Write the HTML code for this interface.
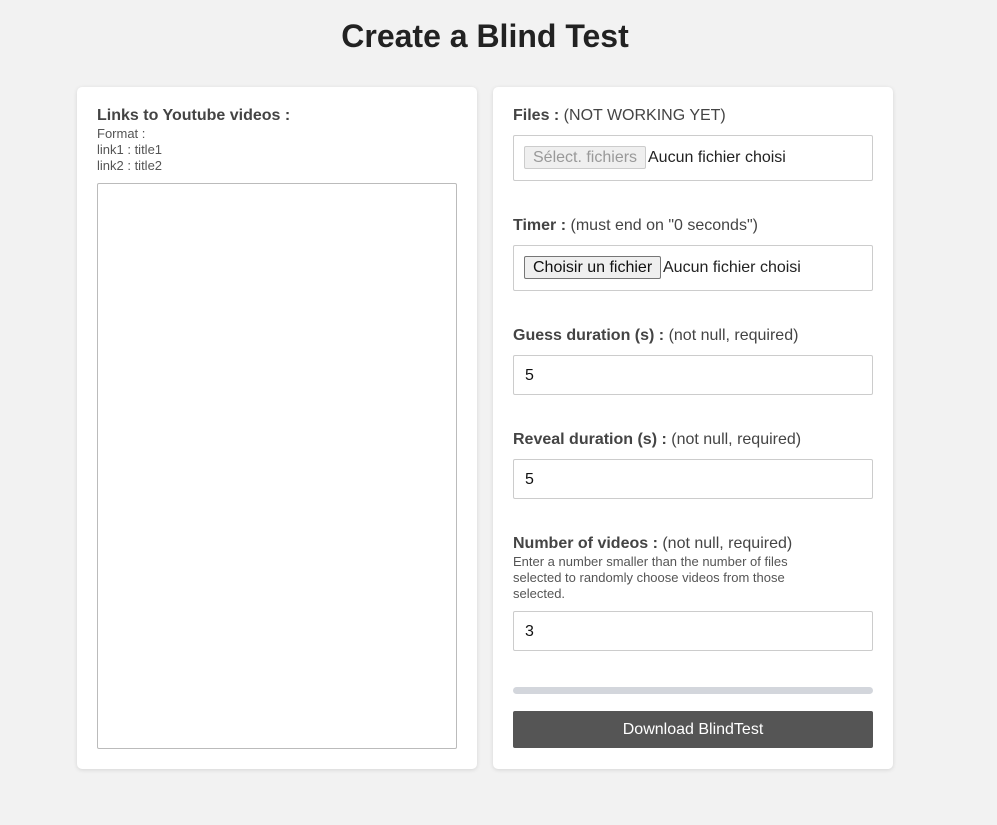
<!DOCTYPE html>
<html><head><meta charset="utf-8"><style>
body{margin:0;width:997px;height:825px;background:#f2f2f2;font-family:"Liberation Sans",Arial,sans-serif;color:#444;position:relative;overflow:hidden}
.a{position:absolute}
h1{position:absolute;left:0;width:970px;text-align:center;top:18px;margin:0;font-size:32px;font-weight:bold;color:#222}
.card{position:absolute;background:#fff;border-radius:5px;box-shadow:0 1px 4px rgba(0,0,0,.12)}
.lbl{position:absolute;font-size:16px;line-height:18px;white-space:nowrap}
.lbl b{color:#444}
.sm{position:absolute;font-size:13px;line-height:16px;color:#555}
.box{position:absolute;left:513px;width:358px;border:1px solid #ccc;border-radius:2px;background:#fff}
.num{font-size:16px;color:#111;position:absolute;left:11px}
.fb{position:absolute;top:10px;left:10px;height:23px;font-size:16px;line-height:21px;padding:0 8px;border:1px solid #767676;border-radius:2px;background:#efefef;color:#111;box-sizing:border-box;white-space:nowrap}
.ft{position:absolute;top:11px;font-size:16px;line-height:22px;color:#222;white-space:nowrap}
</style></head><body>
<h1>Create a Blind Test</h1>
<div class="card" style="left:77px;top:87px;width:400px;height:682px"></div>
<div class="card" style="left:493px;top:87px;width:400px;height:682px"></div>

<div class="lbl" style="left:97px;top:107px"><b>Links to Youtube videos :</b></div>
<div class="sm" style="left:97px;top:126px">Format :<br>link1 : title1<br>link2 : title2</div>
<div class="a" style="left:97px;top:183px;width:358px;height:564px;border:1px solid #bbb;border-radius:2px"></div>

<div class="lbl" style="left:513px;top:107px"><b>Files :</b> (NOT WORKING YET)</div>
<div class="box" style="top:135px;height:44px">
 <div class="fb" style="color:#999;border-color:#ccc">Sélect. fichiers</div>
 <div class="ft" style="left:134px">Aucun fichier choisi</div>
</div>

<div class="lbl" style="left:513px;top:217px"><b>Timer :</b> (must end on "0 seconds")</div>
<div class="box" style="top:245px;height:44px">
 <div class="fb">Choisir un fichier</div>
 <div class="ft" style="left:149px">Aucun fichier choisi</div>
</div>

<div class="lbl" style="left:513px;top:327px"><b>Guess duration (s) :</b> (not null, required)</div>
<div class="box" style="top:355px;height:38px"><div class="num" style="top:11px">5</div></div>

<div class="lbl" style="left:513px;top:431px"><b>Reveal duration (s) :</b> (not null, required)</div>
<div class="box" style="top:459px;height:38px"><div class="num" style="top:11px">5</div></div>

<div class="lbl" style="left:513px;top:535px"><b>Number of videos :</b> (not null, required)</div>
<div class="sm" style="left:513px;top:554px;width:310px">Enter a number smaller than the number of files selected to randomly choose videos from those selected.</div>
<div class="box" style="top:611px;height:38px"><div class="num" style="top:11px">3</div></div>

<div class="a" style="left:513px;top:687px;width:360px;height:7px;border-radius:4px;background:#d3d6dc"></div>
<div class="a" style="left:513px;top:711px;width:360px;height:37px;border-radius:2px;background:#555;color:#fff;font-size:16px;line-height:37px;text-align:center">Download BlindTest</div>
</body></html>
